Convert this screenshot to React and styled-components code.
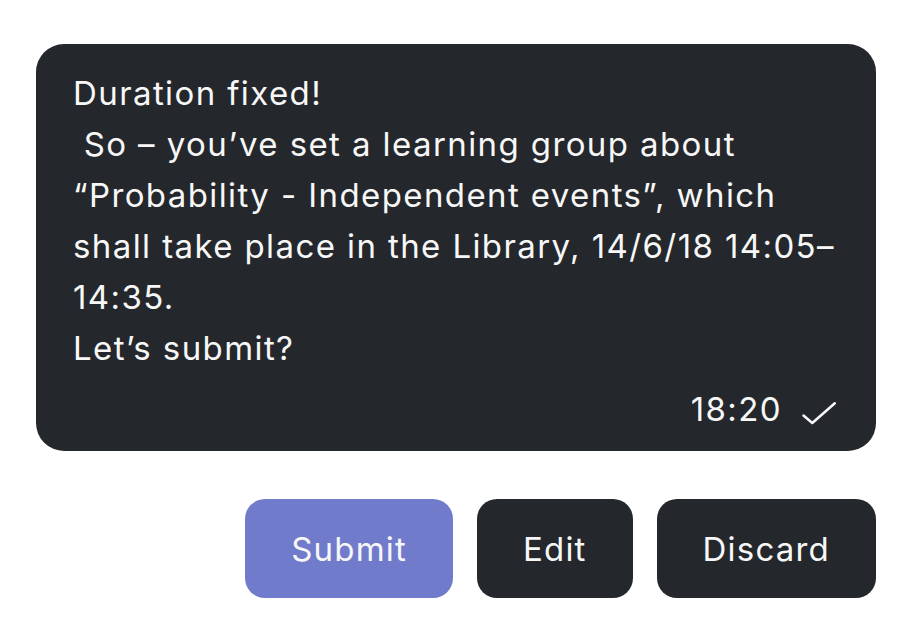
import React from "react";
import styled, { createGlobalStyle } from "styled-components";

const GlobalStyle = createGlobalStyle`
  body {
    margin: 0;
    background: #ffffff;
    font-family: Inter, "Noto Sans", sans-serif;
  }
`;

const Page = styled.div`
  padding: 44px 36px;
  display: flex;
  flex-direction: column;
  gap: 48px;
`;

const Bubble = styled.div`
  background: #24282c;
  color: #f7f7f7;
  border-radius: 28px;
  padding: 24px 37px 16px;
  font-size: 33px;
  line-height: 51px;
  letter-spacing: 1.4px;
`;

const Line = styled.span`
  display: block;
  white-space: pre;
`;

const Meta = styled.div`
  display: flex;
  justify-content: flex-end;
  align-items: center;
  gap: 20px;
  margin-top: 10px;
  padding-right: 3px;
`;

const CheckSvg = styled.svg`
  margin-top: 7px;
`;

const Actions = styled.div`
  display: flex;
  justify-content: flex-end;
  gap: 24px;
`;

const Button = styled.button`
  height: 99px;
  padding: 0 46px;
  border: none;
  border-radius: 20px;
  background: ${(p) => (p.$primary ? "#717bcb" : "#24282c")};
  color: #f7f7f7;
  font-family: Inter, "Noto Sans", sans-serif;
  font-size: 33px;
  letter-spacing: 1.2px;
  cursor: pointer;
`;

const lines = [
  "Duration fixed!",
  " So – you’ve set a learning group about",
  "“Probability - Independent events”, which",
  "shall take place in the Library, 14/6/18 14:05–",
  "14:35.",
  "Let’s submit?",
];

const Check = () => (
  <CheckSvg width="34" height="24" viewBox="0 0 34 24" fill="none">
    <polyline
      points="1.5,14.5 10.3,22 32.8,2.3"
      stroke="#f7f7f7"
      strokeWidth="2.5"
      strokeLinecap="round"
      strokeLinejoin="round"
    />
  </CheckSvg>
);

export default function App() {
  return (
    <>
      <GlobalStyle />
      <Page>
        <Bubble>
          {lines.map((l, i) => (
            <Line key={i}>{l}</Line>
          ))}
          <Meta>
            <span>18:20</span>
            <Check />
          </Meta>
        </Bubble>
        <Actions>
          <Button $primary>Submit</Button>
          <Button>Edit</Button>
          <Button>Discard</Button>
        </Actions>
      </Page>
    </>
  );
}
